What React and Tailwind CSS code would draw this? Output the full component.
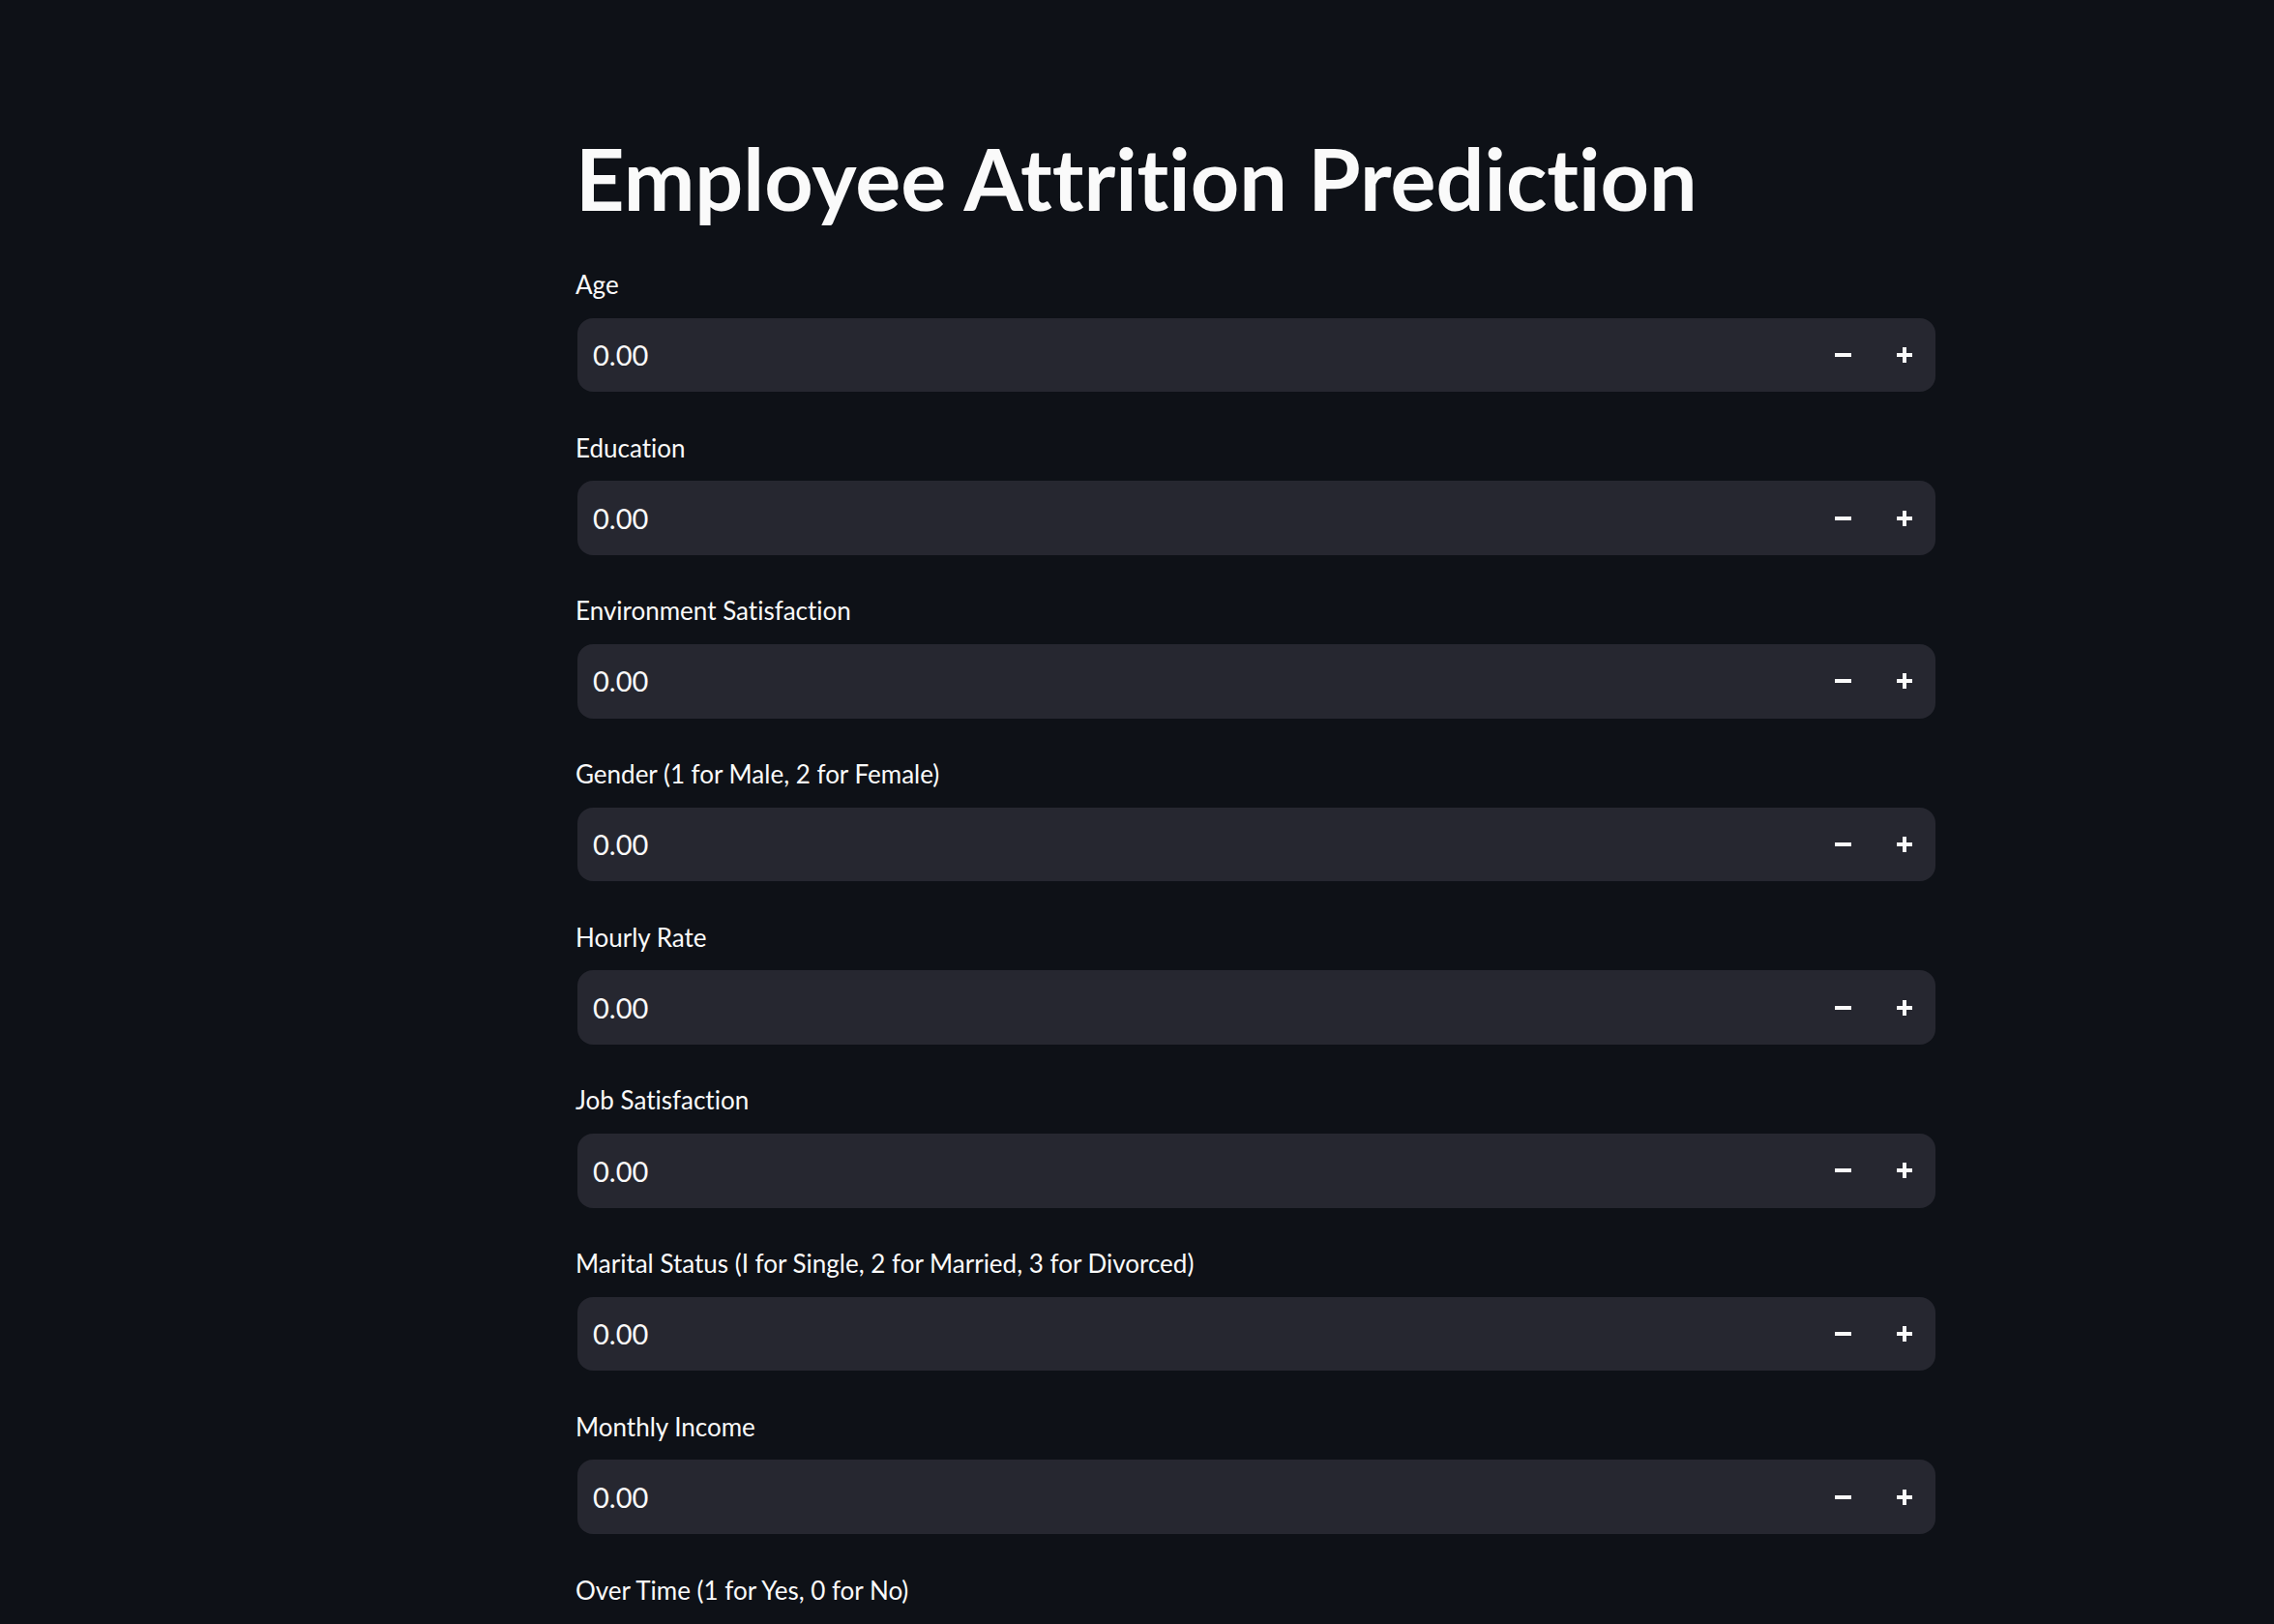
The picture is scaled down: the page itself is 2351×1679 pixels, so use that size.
import React from 'react';

const fields = [
  'Age',
  'Education',
  'Environment Satisfaction',
  'Gender (1 for Male, 2 for Female)',
  'Hourly Rate',
  'Job Satisfaction',
  'Marital Status (I for Single, 2 for Married, 3 for Divorced)',
  'Monthly Income',
  'Over Time (1 for Yes, 0 for No)',
];

const font = { fontFamily: 'Lato, "Noto Sans", sans-serif' };

function MinusIcon() {
  return (
    <svg width="17" height="4" viewBox="0 0 17 4">
      <rect x="0" y="0" width="17" height="4" fill="#fafafa" />
    </svg>
  );
}

function PlusIcon() {
  return (
    <svg width="16" height="16" viewBox="0 0 16 16">
      <rect x="0" y="6" width="16" height="4" fill="#fafafa" />
      <rect x="6" y="0" width="4" height="16" fill="#fafafa" />
    </svg>
  );
}

// last field's input sits below the fold, so only its label is drawn
function NumberField({ label, showInput }) {
  return (
    <div className="flex flex-col mb-[39.5px]">
      <div className="h-[36px] leading-[36px] text-[26px] text-[#fafafa] whitespace-nowrap">
        {label}
      </div>
      {showInput && (
        <div className="mt-[16.5px] ml-[2px] h-[76.7px] rounded-[16px] bg-[#262730] flex items-center">
          <div className="flex-1 pl-[16px] text-[29px] text-[#fafafa]">0.00</div>
          <button className="w-[64px] h-full flex items-center justify-center">
            <MinusIcon />
          </button>
          <button className="w-[64px] h-full flex items-center justify-center">
            <PlusIcon />
          </button>
        </div>
      )}
    </div>
  );
}

export default function App() {
  return (
    <div className="h-screen bg-[#0e1117] overflow-hidden [font-variant-ligatures:none]" style={font}>
      <div className="ml-[595px] w-[1406px] pt-[140px]">
        <h1 className="text-[88px] leading-none font-bold text-[#fafafa] whitespace-nowrap">
          Employee Attrition Prediction
        </h1>
        <div className="mt-[48px]">
          {fields.map((f, i) => (
            <NumberField key={f} label={f} showInput={i < fields.length - 1} />
          ))}
        </div>
      </div>
    </div>
  );
}
